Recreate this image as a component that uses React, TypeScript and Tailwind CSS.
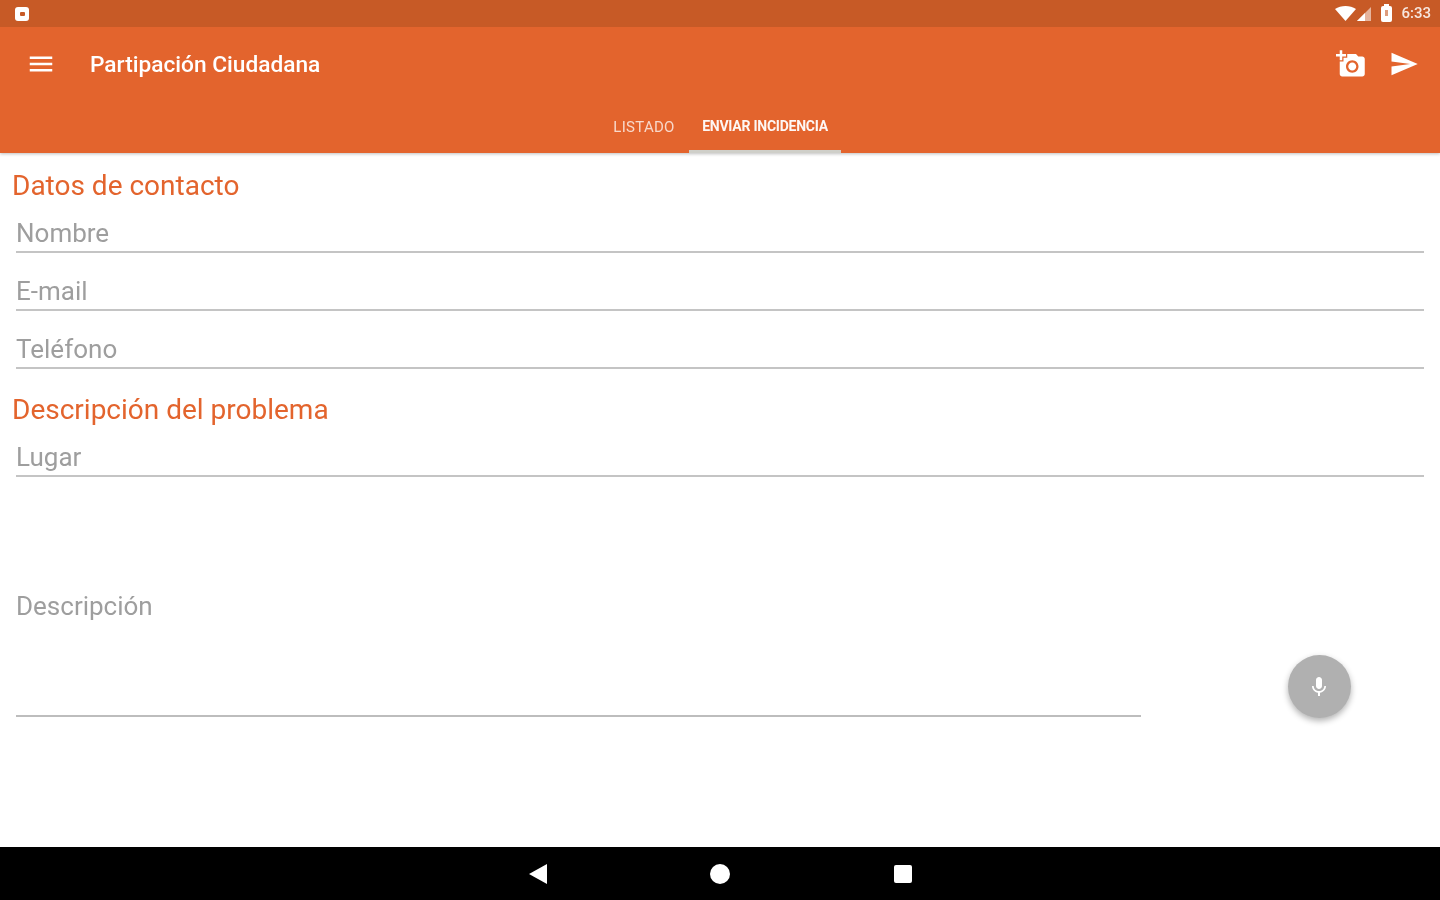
import { MdAddAPhoto, MdMenu, MdMic, MdSend } from "react-icons/md";

const fieldText = "text-[26px] leading-[32px] text-[#9e9e9e]";

const Field = ({ label }: { label: string }) => (
  <div className="h-[58px] mx-4 pt-[22px] border-b-2 border-[#c4c4c4]">
    <div className={fieldText}>{label}</div>
  </div>
);

const StatusBar = () => (
  <div className="h-[27px] bg-[#c75a26] flex items-center justify-between pl-[15px] pr-[9px]">
    <div className="w-[14px] h-[14px] rounded-[3px] bg-white flex items-center justify-center">
      <div className="w-[5px] h-[4px] bg-[#c75a26] rounded-[1px]" />
    </div>
    <div className="flex items-center">
      <svg width="21" height="16" viewBox="0 0 21 16" className="mr-[1px]">
        <path d="M0 3 C6 -1 15 -1 21 3 L10.5 15 Z" fill="#fff" />
      </svg>
      <svg width="14" height="14" viewBox="0 0 14 14" className="mr-[10px]">
        <path d="M14 0 V14 H0 Z" fill="#fff" fillOpacity="0.55" />
        <path d="M8 6 V14 H0 Z" fill="#fff" />
      </svg>
      <div className="relative w-[11px] h-[16px] rounded-[2px] bg-white mr-[9px]">
        <div className="absolute left-[3px] top-[-2px] w-[5px] h-[2px] bg-white" />
        <div className="absolute left-[4px] top-[4px] w-[3px] h-[6px] bg-[#c75a26] opacity-60" />
      </div>
      <span className="text-[15px] leading-none font-medium text-white/85">6:33</span>
    </div>
  </div>
);

const Toolbar = () => (
  <div className="h-[74px] flex items-center justify-between pl-[26px] pr-[21px] text-white">
    <div className="flex items-center">
      <MdMenu size={30} />
      <h1 className="ml-[34px] mt-[2px] text-[22.7px] font-medium leading-none">Partipación Ciudadana</h1>
    </div>
    <div className="flex items-center gap-[23px]">
      <MdAddAPhoto size={30} />
      <MdSend size={30} />
    </div>
  </div>
);

const Tabs = () => (
  <div className="h-[52px] flex justify-center leading-none">
    <div className="w-[90px] h-full flex items-center justify-center text-[15px] tracking-[0.3px] text-white/75">
      LISTADO
    </div>
    <div className="w-[152px] h-full flex items-center justify-center text-[14px] font-bold text-white/95 tracking-[-0.25px] border-b-[3px] border-[#cfcfc9]">
      ENVIAR INCIDENCIA
    </div>
  </div>
);

const Heading = ({ children, className }: { children: string; className: string }) => (
  <h2 className={`h-[25px] ml-3 text-[28px] leading-[32px] text-[#e3642d] ${className}`}>{children}</h2>
);

export default function App() {
  return (
    <div className="h-[900px] flex flex-col bg-white overflow-hidden blur-[0.6px] font-['Roboto',sans-serif]">
      <header className="bg-[#e3642d] shadow-[0_1px_3px_rgba(0,0,0,0.25)] z-10">
        <StatusBar />
        <Toolbar />
        <Tabs />
      </header>

      <main className="flex-1">
        <Heading className="mt-[17px]">Datos de contacto</Heading>
        <Field label="Nombre" />
        <Field label="E-mail" />
        <Field label="Teléfono" />

        <Heading className="mt-[25px]">Descripción del problema</Heading>
        <Field label="Lugar" />

        <div className="flex items-end">
          <div className="w-[1125px] h-[240px] ml-4 pt-[113px] border-b-2 border-[#bdbdbd]">
            <div className={fieldText}>Descripción</div>
          </div>
          <button className="w-[63px] h-[63px] ml-[147px] mb-[-1px] rounded-full bg-[#b0b0b0] text-white flex items-center justify-center shadow-[0_3px_6px_rgba(0,0,0,0.3)]">
            <MdMic size={24} className="mr-[1px]" />
          </button>
        </div>
      </main>

      <nav className="h-[53px] bg-black flex items-center justify-center">
        <svg width="18" height="20" viewBox="0 0 18 20">
          <path d="M18 0 V20 L0 10 Z" fill="#fff" />
        </svg>
        <div className="w-[20px] h-[20px] rounded-full bg-white ml-[163px]" />
        <div className="w-[18px] h-[18px] rounded-[2px] bg-white ml-[164px]" />
      </nav>
    </div>
  );
}
